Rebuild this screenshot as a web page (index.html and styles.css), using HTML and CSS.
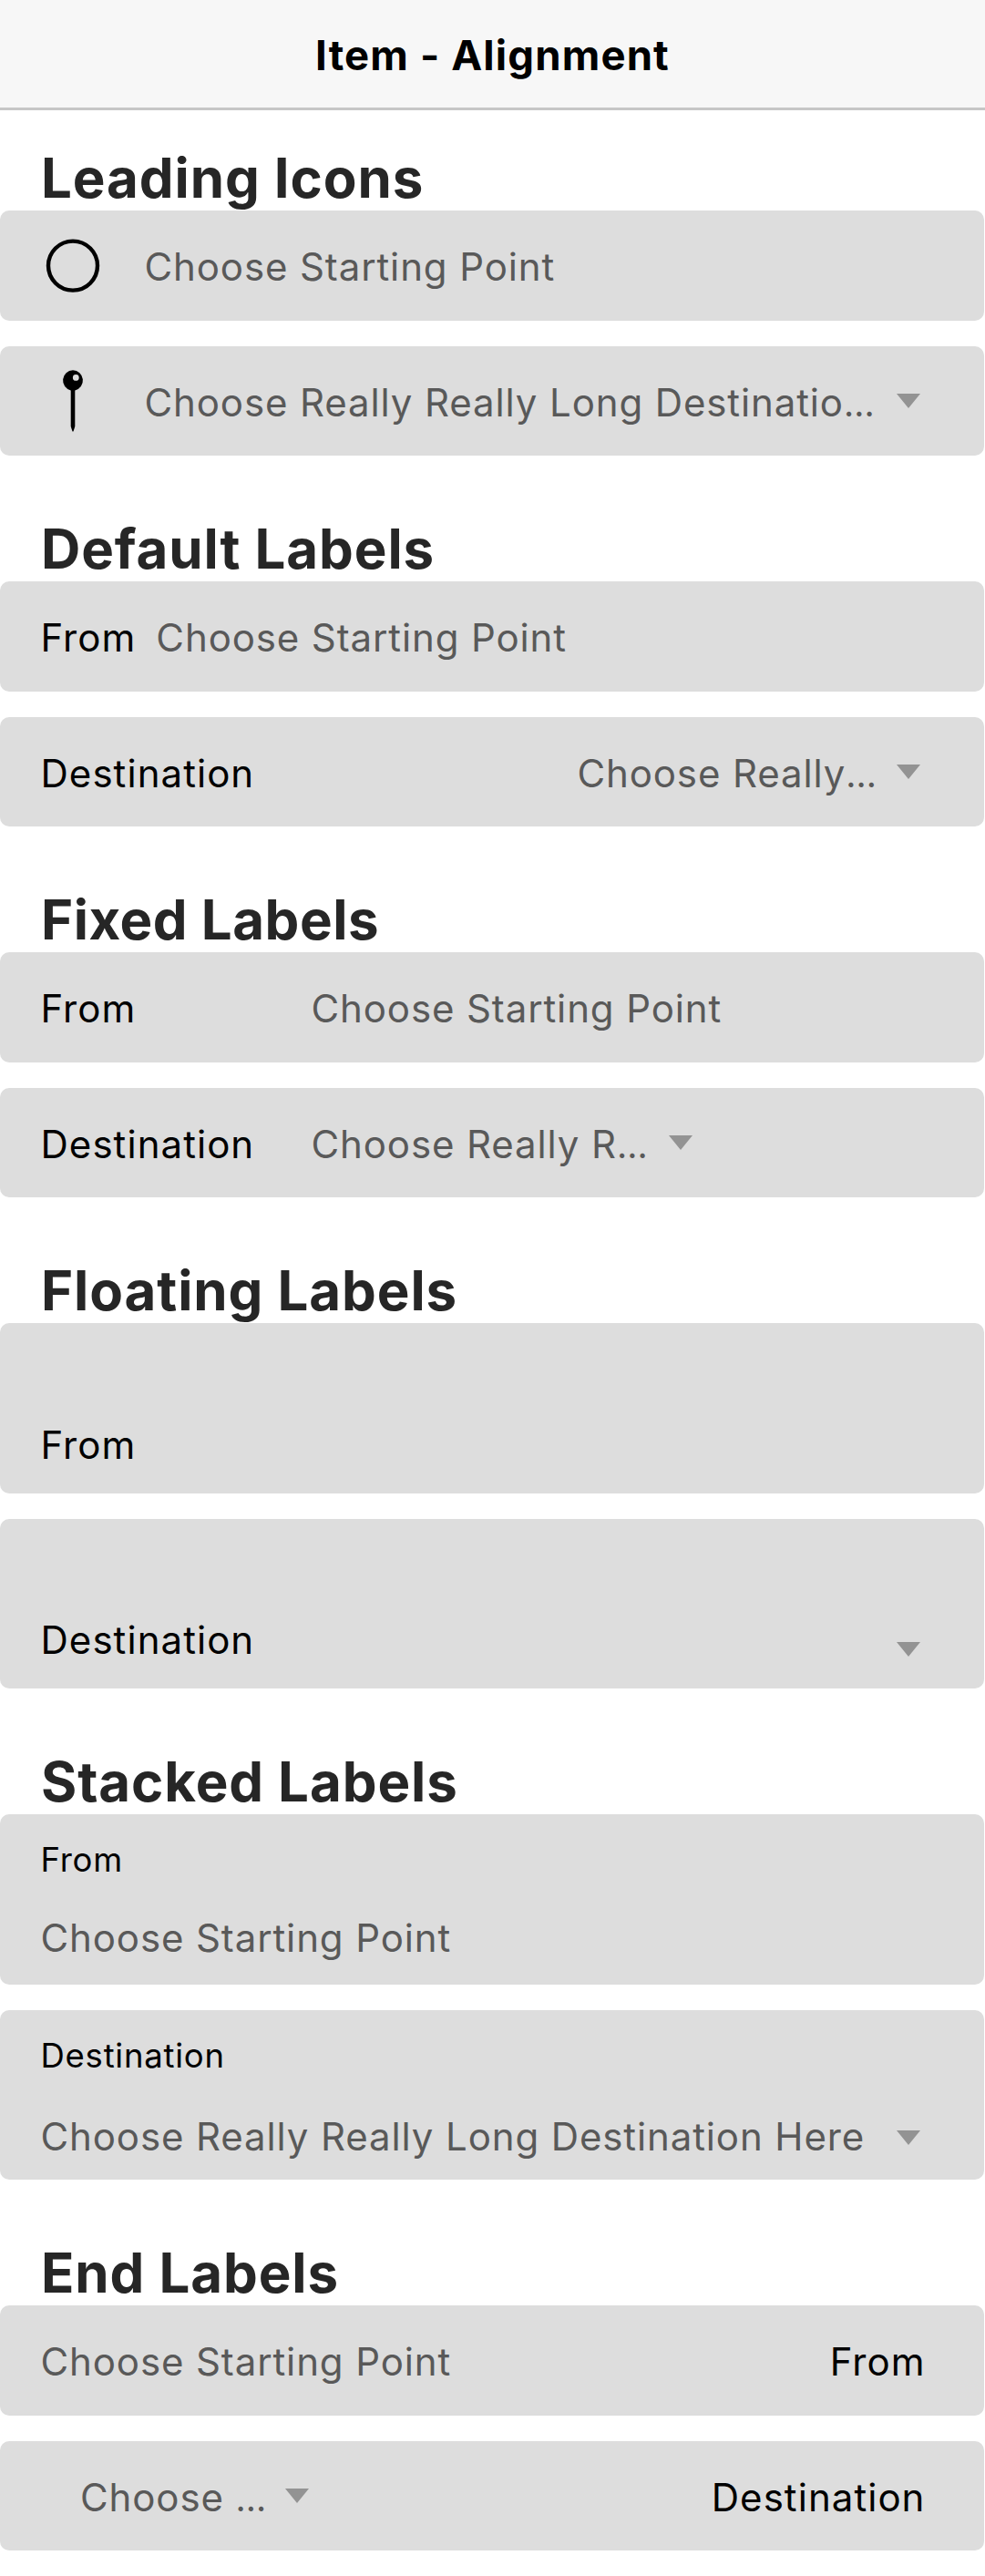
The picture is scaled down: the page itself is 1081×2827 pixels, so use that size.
FILE: index.html
```html
<!DOCTYPE html>
<html lang="en">
<head>
<meta charset="utf-8">
<title>Item - Alignment</title>
<link rel="stylesheet" href="styles.css">
</head>
<body>
<header class="toolbar"><h1 class="toolbar-title">Item - Alignment</h1></header>
<main class="content">
  <section class="group">
    <h2 class="heading">Leading Icons</h2>
    <div class="item">
      <svg class="icon" viewBox="0 0 72 72"><circle cx="36" cy="35.6" r="27" fill="none" stroke="#000" stroke-width="4.4"/></svg>
      <span class="value">Choose Starting Point</span>
    </div>
    <div class="item">
      <svg class="icon" viewBox="0 0 72 72"><path fill-rule="evenodd" d="M36 2.3a11.2 11.2 0 0 1 2.3 22.1V64L36.5 69.4h-1L33.7 64V24.4A11.2 11.2 0 0 1 36 2.3zM39.3 7a3.4 3.4 0 1 0 0 6.8a3.4 3.4 0 0 0 0-6.8z"/></svg>
      <span class="value">Choose Really Really Long Destinatio<span class="dots">…</span></span>
      <svg class="arrow" viewBox="0 0 26 16"><path d="M0 0h26L13 16z"/></svg>
    </div>
  </section>
  <section class="group">
    <h2 class="heading">Default Labels</h2>
    <div class="item">
      <span class="label">From</span>
      <span class="value">Choose Starting Point</span>
    </div>
    <div class="item">
      <span class="label">Destination</span>
      <span class="value value-end">Choose Really<span class="dots">…</span></span>
      <svg class="arrow" viewBox="0 0 26 16"><path d="M0 0h26L13 16z"/></svg>
    </div>
  </section>
  <section class="group">
    <h2 class="heading heading-tight">Fixed Labels</h2>
    <div class="item">
      <span class="label label-fixed">From</span>
      <span class="value">Choose Starting Point</span>
    </div>
    <div class="item">
      <span class="label label-fixed">Destination</span>
      <span class="value value-fixed">Choose Really R<span class="dots">…</span></span>
      <svg class="arrow arrow-inline" viewBox="0 0 26 16"><path d="M0 0h26L13 16z"/></svg>
    </div>
  </section>
  <section class="group">
    <h2 class="heading">Floating Labels</h2>
    <div class="item item-tall">
      <span class="label label-floating">From</span>
    </div>
    <div class="item item-tall">
      <span class="label label-floating">Destination</span>
      <svg class="arrow arrow-floating" viewBox="0 0 26 16"><path d="M0 0h26L13 16z"/></svg>
    </div>
  </section>
  <section class="group">
    <h2 class="heading">Stacked Labels</h2>
    <div class="item item-tall">
      <div class="stack">
        <span class="label-stacked">From</span>
        <span class="value value-stacked">Choose Starting Point</span>
      </div>
    </div>
    <div class="item item-tall">
      <div class="stack stack-select">
        <span class="label-stacked">Destination</span>
        <span class="value value-stacked">Choose Really Really Long Destination Here</span>
      </div>
      <svg class="arrow arrow-stacked" viewBox="0 0 26 16"><path d="M0 0h26L13 16z"/></svg>
    </div>
  </section>
  <section class="group">
    <h2 class="heading">End Labels</h2>
    <div class="item item-end">
      <span class="value">Choose Starting Point</span>
      <span class="label label-end">From</span>
    </div>
    <div class="item item-end item-indent">
      <span class="value value-short">Choose <span class="dots">…</span></span>
      <svg class="arrow arrow-inline" viewBox="0 0 26 16"><path d="M0 0h26L13 16z"/></svg>
      <span class="label label-end">Destination</span>
    </div>
  </section>
</main>
</body>
</html>
```
FILE: styles.css
```css
* { box-sizing: border-box; }

body {
  margin: 0;
  background: #fff;
  color: #000;
  font: 400 42px/60px Inter, "Liberation Sans", sans-serif;
  letter-spacing: 0.88px;
  white-space: nowrap;
}

.toolbar {
  height: 121px;
  padding-top: 31px;
  background: #f7f7f7;
  border-bottom: 3px solid #c6c6c6;
  text-align: center;
}

.toolbar-title {
  margin: 0;
  font-size: 45.5px;
  font-weight: 700;
  line-height: 60px;
  letter-spacing: 1.15px;
}

.content {
  display: flex;
  flex-direction: column;
  gap: 28px;
}

.group {
  display: flex;
  flex-direction: column;
}

.heading {
  height: 110px;
  margin: 0;
  padding: 38px 0 0 45px;
  color: #262626;
  font-size: 60px;
  font-weight: 650;
  line-height: 72px;
  letter-spacing: 0.9px;
}

.heading-tight { letter-spacing: 0.5px; }

.item {
  display: flex;
  align-items: center;
  width: 1080px;
  height: 121px;
  padding: 0 70px 0 44.5px;
  border-radius: 10px;
  background: #ddd;
}

.item + .item {
  height: 120px;
  margin-top: 28px;
}

.item-tall {
  align-items: flex-start;
  height: 187px;
}

.item-tall + .item-tall { height: 186px; }

.icon {
  flex: none;
  width: 72px;
  height: 72px;
  margin: 0 42.5px 0 -0.5px;
}

.label {
  padding-top: 3px;
  letter-spacing: 1.05px;
}

.value {
  padding-top: 3px;
  color: #595959;
}

.dots {
  font-size: 39px;
  line-height: 1;
  letter-spacing: 0;
}

.label + .value { margin-left: 22px; }
.label + .value-end { margin-left: auto; }
.value-end { margin-right: 22px; }

.label-fixed { width: 297px; }
.label-fixed + .value { margin-left: 0; }
.value-fixed { width: 392px; }

.arrow {
  flex: none;
  width: 26px;
  height: 16px;
  margin-left: auto;
  fill: #939393;
}

.value-end + .arrow,
.arrow-inline { margin-left: 0; }

.label-floating { margin-top: 101px; }
.item-tall + .item-tall .label-floating { margin-top: 100px; }
.arrow-floating { margin-top: 135px; }
.arrow-stacked { margin-top: 132px; }

.stack {
  display: flex;
  flex-direction: column;
  gap: 34px;
  padding-top: 28px;
}

.stack-select { gap: 37px; }

.label-stacked {
  font-size: 36.5px;
  line-height: 44px;
  letter-spacing: 0.75px;
}

.value-stacked { padding-top: 0; }

.item-end { padding-right: 64.5px; }
.item-indent { padding-left: 88px; }
.label-end { margin-left: auto; }
.value-short { width: 225px; }
```
